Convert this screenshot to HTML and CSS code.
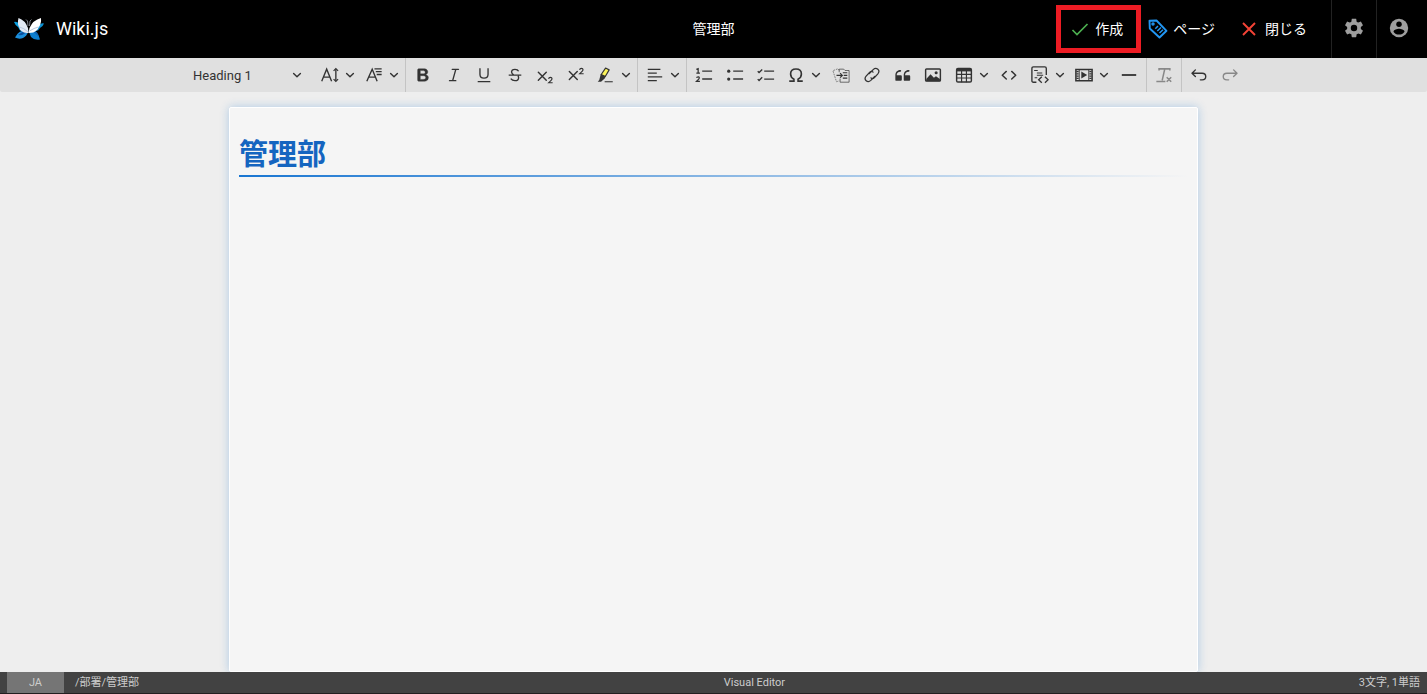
FILE: index.html
```html
<!DOCTYPE html>
<html lang="ja">
<head>
<meta charset="utf-8">
<meta name="viewport" content="width=device-width, initial-scale=1">
<title>管理部 | Wiki.js</title>
<link rel="stylesheet" href="styles.css">
</head>
<body>
<svg class="sprite" aria-hidden="true">
  <symbol id="chev" viewBox="0 0 10 10"><path d="M1.600 3.400 5 6.800l3.400-3.400" fill="none" stroke="currentColor" stroke-width="1.400" stroke-linecap="round" stroke-linejoin="round"/></symbol>
</svg>

<header class="appbar">
  <a class="brand" href="#">
    <svg class="logo" viewBox="0 0 30 23" aria-hidden="true">
      <path d="M0 5 Q3 4 7 8 L11 14 6 13.500 4 10 Q1 8 0 5Z" fill="#0b9fe0"/>
      <path d="M30 6.500 Q27 5.500 23 9 L19 14 24 13.500 26 11 Q29 9.500 30 6.500Z" fill="#0b8fd0"/>
      <path d="M14 13 Q5 12 1 20.500 Q5 22.500 9 21 Q13 19 14.500 14Z" fill="#1b8edb"/>
      <path d="M15.500 13 Q24 12 26 22.500 Q20 23.500 17 20 Q15 17 15.500 13Z" fill="#0d7fd0"/>
      <path d="M12 14 Q7 15 4 18 Q10 19 13 14Z" fill="#0c4f9c"/>
      <path d="M17 14 Q21 15 24 19 Q24 14 18 13Z" fill="#0c5fb0"/>
      <path d="M4.500 1 Q11 3 14 11 L14.500 16 Q10 16.500 7.500 14 Q5.500 13 5.500 11 Q3 7 4.500 1Z" fill="#e3eaf4"/>
      <path d="M27 1 Q19 3 15.500 11 L14.500 16 Q20 16 22.500 13.500 Q24 12.500 24.500 10.500 Q27.500 7 27 1Z" fill="#fff"/>
      <path d="M5.500 10 Q10 11 14 15M24.500 10 Q20 11 15.500 14" fill="none" stroke="#b9c8de" stroke-width="1"/>
      <path d="M14 9 13.500 4 12 2.500M15.500 9 16 4 17.500 2.500" fill="none" stroke="#7c7f88" stroke-width="1"/>
    </svg>
    <span>Wiki.js</span>
  </a>
  <div class="page-title">管理部</div>
  <div class="actions">
    <button class="action create" type="button">
      <svg width="18" height="18" viewBox="0 0 18 18" aria-hidden="true"><path d="M1.500 10 6 14.500 16.500 4" fill="none" stroke="#4caf50" stroke-width="1.700"/></svg>
      <span>作成</span>
    </button>
    <button class="action props" type="button">
      <svg width="20" height="20" viewBox="0 0 20 20" aria-hidden="true"><g fill="none" stroke="#2196f3" stroke-width="1.900"><path d="M1.500 1.800 8.500 1.500 18.500 11.800 11.500 18.500 1.800 9.500Z" stroke-linejoin="round"/><circle cx="5" cy="5" r="1" stroke-width="1.500"/><path d="M7.300 9.700 10 7M9.300 12 13 8.500M11.500 14 15 10.800" stroke-width="1.500"/></g></svg>
      <span>ページ</span>
    </button>
    <button class="action close" type="button">
      <svg width="14" height="14" viewBox="0 0 14 14" aria-hidden="true"><path d="M1 1 13 13M13 1 1 13" stroke="#f44336" stroke-width="1.900"/></svg>
      <span>閉じる</span>
    </button>
    <button class="icon-action" type="button" aria-label="設定">
      <svg width="22" height="22" viewBox="0 0 24 24" fill="currentColor"><path d="M12,15.5A3.5,3.5 0 0,1 8.5,12A3.5,3.5 0 0,1 12,8.5A3.5,3.5 0 0,1 15.5,12A3.5,3.5 0 0,1 12,15.5M19.43,12.97C19.47,12.65 19.5,12.33 19.5,12C19.5,11.67 19.47,11.34 19.43,11L21.54,9.37C21.73,9.22 21.78,8.95 21.66,8.73L19.66,5.27C19.54,5.05 19.27,4.96 19.05,5.05L16.56,6.05C16.04,5.66 15.5,5.32 14.87,5.07L14.5,2.42C14.46,2.18 14.25,2 14,2H10C9.75,2 9.54,2.18 9.5,2.42L9.13,5.07C8.5,5.32 7.96,5.66 7.44,6.05L4.95,5.05C4.73,4.96 4.46,5.05 4.34,5.27L2.34,8.73C2.21,8.95 2.27,9.22 2.46,9.37L4.57,11C4.53,11.34 4.5,11.67 4.5,12C4.5,12.33 4.53,12.65 4.57,12.97L2.46,14.63C2.27,14.78 2.21,15.05 2.34,15.27L4.34,18.73C4.46,18.95 4.73,19.03 4.95,18.95L7.44,17.94C7.96,18.34 8.5,18.68 9.13,18.93L9.5,21.58C9.54,21.82 9.75,22 10,22H14C14.25,22 14.46,21.82 14.5,21.58L14.87,18.93C15.5,18.67 16.04,18.34 16.56,17.94L19.05,18.95C19.27,19.03 19.54,18.95 19.66,18.73L21.66,15.27C21.78,15.05 21.73,14.78 21.54,14.63L19.43,12.97Z"/></svg>
    </button>
    <button class="icon-action account" type="button" aria-label="アカウント">
      <svg width="22" height="22" viewBox="0 0 24 24"><circle cx="12" cy="12" r="10" fill="currentColor"/><circle cx="12" cy="8" r="3" fill="#000"/><path d="M6 15.980C7.290 17.920 9.500 19.200 12 19.200s4.710-1.280 6-3.220C17.970 14 14 12.900 12 12.900S6.030 14 6 15.980Z" fill="#000"/></svg>
    </button>
  </div>
</header>

<div class="toolbar" role="toolbar" aria-label="Editor toolbar">
  <div class="group g-style">
    <button class="heading" type="button"><span>Heading 1</span><svg class="chev"><use href="#chev"/></svg></button>
    <button class="tool drop" type="button" aria-label="Font Size"><svg class="ico" viewBox="0 0 20 20"><g fill="none" stroke="currentColor" stroke-width="1.500"><path d="M.8 17 6.300 3.500 11.800 17M3 12.300h6.800M16.500 3.500v13"/><path d="M14 5.500 16.500 3 19 5.500M14 14.500 16.500 17 19 14.500" stroke-width="1.300"/></g></svg><svg class="chev"><use href="#chev"/></svg></button>
    <button class="tool drop" type="button" aria-label="Font Family"><svg class="ico" viewBox="0 0 20 20"><path d="M2 17 8 3.500 13.500 17M4.200 12.300h7.500M10.500 3.200h8M12 6.300h6.500M13 9.400h5.500" fill="none" stroke="currentColor" stroke-width="1.500"/></svg><svg class="chev"><use href="#chev"/></svg></button>
  </div>
  <div class="group g-basic">
    <button class="tool" type="button" aria-label="Bold"><svg class="ico" viewBox="0 0 20 20"><path d="M10.187 17H5.773c-.637 0-1.092-.138-1.364-.415-.273-.277-.409-.718-.409-1.323V4.738c0-.617.14-1.062.419-1.332.279-.27.73-.406 1.354-.406h4.680c.69 0 1.288.041 1.793.124.506.083.96.242 1.360.478.341.197.644.447.906.75a3.262 3.262 0 0 1 .808 2.162c0 1.401-.722 2.426-2.167 3.075C15.050 10.175 16 11.315 16 13.010a3.756 3.756 0 0 1-2.296 3.504 6.100 6.100 0 0 1-1.517.377c-.571.073-1.238.11-2 .11zm-.217-6.217H7v4.087h3.069c1.977 0 2.965-.69 2.965-2.072 0-.707-.256-1.220-.768-1.537-.512-.319-1.277-.478-2.296-.478zM7 5.130v3.619h2.606c.729 0 1.292-.067 1.690-.2a1.600 1.600 0 0 0 .91-.765c.165-.267.247-.566.247-.897 0-.707-.26-1.176-.778-1.409-.519-.232-1.310-.348-2.375-.348H7z" fill="currentColor" stroke="currentColor" stroke-width=".4"/></svg></button>
    <button class="tool" type="button" aria-label="Italic"><svg class="ico" viewBox="0 0 20 20"><path d="M8 3.700h7M5 16.300h7M12 3.700 8.500 16.300" fill="none" stroke="currentColor" stroke-width="1.500" stroke-linecap="round"/></svg></button>
    <button class="tool" type="button" aria-label="Underline"><svg class="ico" viewBox="0 0 20 20"><path d="M5.500 2.500v6.700q0 4.300 4.500 4.300t4.500-4.300V2.500M3 17.300h14" fill="none" stroke="currentColor" stroke-width="1.500"/></svg></button>
    <button class="tool" type="button" aria-label="Strikethrough"><svg class="ico" viewBox="0 0 20 20"><path d="M14 5.800Q13 3.700 10 3.700 6.200 3.700 6.200 6.700 6.200 8.500 8.500 9.700M5.300 14Q7 16.300 10 16.300 14 16.300 14 13 14 12 13.300 11M3 10.200h14" fill="none" stroke="currentColor" stroke-width="1.500"/></svg></button>
    <button class="tool" type="button" aria-label="Subscript"><svg class="ico" viewBox="0 0 20 20"><path d="M2.600 7 11.400 15.900M11.400 7 2.600 15.900" stroke="currentColor" stroke-width="1.600" stroke-linecap="round"/><path d="M14 14.200Q14.300 12.700 16 12.700 17.800 12.700 17.800 14.300 17.800 15.300 14.200 18.600H18.500" fill="none" stroke="currentColor" stroke-width="1.300"/></svg></button>
    <button class="tool" type="button" aria-label="Superscript"><svg class="ico" viewBox="0 0 20 20"><path d="M2.600 6 11.400 14.900M11.400 6 2.600 14.900" stroke="currentColor" stroke-width="1.600" stroke-linecap="round"/><path d="M14 4.200Q14.300 2.700 16 2.700 17.800 2.700 17.800 4.300 17.800 5.300 14.200 8.600H18.500" fill="none" stroke="currentColor" stroke-width="1.300"/></svg></button>
    <button class="tool drop" type="button" aria-label="Highlight"><svg class="ico" viewBox="0 0 20 20"><path d="M9.500 2.300 13.500 4.300 9.200 11.700 4.700 9.500Z" fill="#fbf45a" stroke="currentColor" stroke-width="1.300" stroke-linejoin="round"/><path d="M4.200 9 9.500 11.800 8.800 13.700 4.500 17.500H.8L2.500 15.500Z" fill="currentColor"/><path d="M8.500 17.500h9" stroke="currentColor" stroke-width="1.200"/></svg><svg class="chev"><use href="#chev"/></svg></button>
  </div>
  <div class="group g-align">
    <button class="tool drop" type="button" aria-label="Text alignment"><svg class="ico" viewBox="0 0 20 20"><path d="M2 3.700h14M2 7.900h10M2 12.100h16M2 16.300h10" stroke="currentColor" stroke-width="1.500"/></svg><svg class="chev"><use href="#chev"/></svg></button>
  </div>
  <div class="group g-insert">
    <button class="tool" type="button" aria-label="Numbered List"><svg class="ico" viewBox="0 0 20 20"><path d="M8 5.700h11M8 14.500h11" stroke="currentColor" stroke-width="1.600"/><path d="M1.500 3.700 3.500 3V8M1.500 8h4M1.500 12.800Q4.800 11.300 4.800 13.300 4.800 14.200 1.800 17H5.500" fill="none" stroke="currentColor" stroke-width="1.400"/></svg></button>
    <button class="tool" type="button" aria-label="Bulleted List"><svg class="ico" viewBox="0 0 20 20"><path d="M8 5.700h11M8 14.500h11" stroke="currentColor" stroke-width="1.600"/><circle cx="3" cy="5.700" r="1.800" fill="currentColor"/><circle cx="3" cy="14.500" r="1.800" fill="currentColor"/></svg></button>
    <button class="tool" type="button" aria-label="To-do List"><svg class="ico" viewBox="0 0 20 20"><path d="M8 5.700h11M8 14.500h11M.8 5.800 2.300 7.300 5.800 3.800M.8 14.600 2.300 16.100 5.800 12.600" fill="none" stroke="currentColor" stroke-width="1.500"/></svg></button>
    <button class="tool drop" type="button" aria-label="Special characters"><svg class="ico" viewBox="0 0 20 20"><path d="M2.500 16.800H7.700V14.700Q4 12.500 4 8.800 4 3.400 10 3.400T16 8.800Q16 12.500 12.300 14.700V16.800H17.500" fill="none" stroke="currentColor" stroke-width="1.800"/></svg><svg class="chev"><use href="#chev"/></svg></button>
    <button class="tool" type="button" aria-label="Insert page link"><svg class="ico" viewBox="0 0 20 20"><g fill="none" stroke="currentColor"><path d="M8 5 6.800 3 1 5.200 5 17.500 8 16.500" stroke-dasharray="2 1" opacity=".6"/><path d="M8 7V3.500h5L14.500 5H19v13H9v-4" opacity=".75"/><path d="M5 10.500h6M9 8l2.500 2.500L9 13M12 7.500h5M13 10.500h4M12 13.500h5" stroke-width="1.300"/></g></svg></button>
    <button class="tool" type="button" aria-label="Link"><svg class="ico" viewBox="0 0 20 20"><g fill="none" stroke="currentColor" stroke-width="1.400" stroke-linecap="round"><path d="M7 8.500 11.300 4Q14 1.500 16.500 3.700T16.300 9L12.500 13Q10.500 14.800 8.800 13.200"/><path d="M13 11.500 8.700 16Q6 18.500 3.500 16.300T3.700 11L7.500 7Q9.500 5.200 11.200 6.800"/></g></svg></button>
    <button class="tool" type="button" aria-label="Block quote"><svg class="ico" viewBox="0 0 20 20"><path d="M3 10.400a4 4 0 0 1 4-4c.59 0 .966-.408 1-1 0-.7-.3-1-1-1-3.500 0-5.500 2.600-5.500 6v4.800c0 .9.500 1.300 1.300 1.300h4.500c.9 0 1.400-.5 1.400-1.400v-3.300c0-.9-.5-1.400-1.400-1.400ZM12.300 10.400a4 4 0 0 1 4-4c.59 0 .966-.408 1-1 0-.7-.3-1-1-1-3.500 0-5.500 2.600-5.500 6v4.800c0 .9.500 1.300 1.300 1.300h4.500c.9 0 1.400-.5 1.400-1.400v-3.300c0-.9-.5-1.400-1.400-1.400Z" fill="currentColor"/></svg></button>
    <button class="tool" type="button" aria-label="Image"><svg class="ico" viewBox="0 0 20 20"><rect x="1.800" y="3.300" width="16.400" height="13.400" rx="1" fill="none" stroke="currentColor" stroke-width="1.600"/><path d="M2.500 14.500 7.300 9.300 11 13l2.300-1.500 4.400 3V17H2.500Z" fill="currentColor"/><circle cx="13.500" cy="7.500" r="1.700" fill="currentColor"/></svg></button>
    <button class="tool drop" type="button" aria-label="Table"><svg class="ico" viewBox="0 0 20 20"><rect x="1.800" y="2.800" width="16.400" height="15" rx="1.500" fill="none" stroke="currentColor" stroke-width="1.600"/><path d="M2 9.300h16M2 13.300h16M7.300 4v14M12.700 4v14" stroke="currentColor" stroke-width="1.300"/><path d="M2 3h16v3H2Z" fill="currentColor"/></svg><svg class="chev"><use href="#chev"/></svg></button>
    <button class="tool" type="button" aria-label="Code"><svg class="ico" viewBox="0 0 20 20"><path d="M7 6 2.500 10.200 7 14.500M13 6l4.500 4.200L13 14.500" fill="none" stroke="currentColor" stroke-width="1.600" stroke-linecap="round" stroke-linejoin="round"/></svg></button>
    <button class="tool drop" type="button" aria-label="Code block"><svg class="ico" viewBox="0 0 20 20"><g fill="none" stroke="currentColor" stroke-width="1.500"><path d="M6 18H2.700Q1 18 1 16.300V2.700Q1 1 2.700 1h12.600Q17 1 17 2.700V10"/><path d="M3.500 5h4M6.500 7.700h6M6.500 10.300h7M4 13h3" stroke-width="1.200"/><path d="M12 12 8.500 15.300 12 18.600M15.500 12 19 15.300 15.500 18.600"/></g></svg><svg class="chev"><use href="#chev"/></svg></button>
    <button class="tool drop" type="button" aria-label="Media"><svg class="ico" viewBox="0 0 20 20"><path d="M1 4h18v12.500H1Z" fill="none" stroke="currentColor" stroke-width="1.700"/><path d="M2.800 5.500v10M17.200 5.500v10" stroke="currentColor" stroke-width="2.500" stroke-dasharray="1.500 1"/><path d="M4.700 4v12M15.300 4v12" stroke="currentColor"/><path d="M7 6 13.500 10 7 14Z" fill="currentColor"/></svg><svg class="chev"><use href="#chev"/></svg></button>
    <button class="tool" type="button" aria-label="Horizontal line"><svg class="ico" viewBox="0 0 20 20"><path d="M2 10h16" stroke="currentColor" stroke-width="2"/></svg></button>
  </div>
  <div class="group g-clear">
    <button class="tool" type="button" aria-label="Remove Format" disabled><svg class="ico" viewBox="0 0 20 20"><path d="M4.500 5V3.200H16.500V5M10.800 3.500 8 16M1.500 17.200h10M13 12.500l5 5M18 12.500l-5 5" fill="none" stroke="currentColor" stroke-width="1.700"/></svg></button>
  </div>
  <div class="group g-history">
    <button class="tool" type="button" aria-label="Undo"><svg class="ico" viewBox="0 0 20 20"><path d="M6 4.300 2.200 8 6 11.700M2.500 8H13.500Q17.500 8 17.500 11.700T13.500 15.400H11.500" fill="none" stroke="currentColor" stroke-width="1.500" stroke-linecap="round" stroke-linejoin="round"/></svg></button>
    <button class="tool" type="button" aria-label="Redo" disabled><svg class="ico" viewBox="0 0 20 20"><path d="M14 4.300 17.800 8 14 11.700M17.500 8H6.500Q2.500 8 2.500 11.700T6.500 15.400H8.500" fill="none" stroke="currentColor" stroke-width="1.500" stroke-linecap="round" stroke-linejoin="round"/></svg></button>
  </div>
</div>

<main class="workspace">
  <article class="sheet" contenteditable="true" spellcheck="false">
    <h1>管理部</h1>
  </article>
</main>

<footer class="status">
  <div class="status-left"><span class="locale">JA</span><span class="path">/部署/管理部</span></div>
  <span>Visual Editor</span>
  <span>3文字, 1単語</span>
</footer>
</body>
</html>
```
FILE: styles.css
```css
* { box-sizing: border-box; }

body {
  margin: 0;
  height: 100vh;
  display: flex;
  flex-direction: column;
  overflow: hidden;
  background: #eee;
  font-family: Roboto, "Noto Sans CJK JP", sans-serif;
}

button {
  border: 0;
  padding: 0;
  margin: 0;
  background: none;
  font: inherit;
  color: inherit;
  cursor: pointer;
}

svg { display: block; flex: none; }
.sprite { position: absolute; width: 0; height: 0; }

/* Top bar */
.appbar {
  display: grid;
  grid-template-columns: 1fr auto 1fr;
  align-items: center;
  height: 58px;
  flex: none;
  background: #000;
  color: #fff;
}

.brand {
  display: flex;
  align-items: center;
  gap: 12px;
  padding: 0 0 2px 14px;
  color: #fff;
  text-decoration: none;
  font-size: 18px;
}
.logo { width: 30px; height: 23px; }
.page-title { padding-bottom: 2px; font-size: 14px; }

.actions {
  display: flex;
  justify-content: flex-end;
  align-items: center;
  height: 100%;
  font-size: 14px;
}
.action {
  display: flex;
  align-items: center;
  height: 48px;
}
.action span { padding-bottom: 3px; }
.create {
  gap: 6px;
  padding: 0 13px 0 10px;
  border: 5px solid #ed1c24;
}
.props { gap: 5px; padding: 0 14px 0 7px; }
.close { gap: 9px; padding: 0 24px 0 13px; }
.icon-action {
  display: flex;
  align-items: center;
  justify-content: center;
  width: 45px;
  height: 100%;
  padding-bottom: 2px;
  border-left: 1px solid #222;
  color: #9e9e9e;
}
.account { width: 51px; padding-right: 6px; }

/* Formatting toolbar */
.toolbar {
  display: flex;
  justify-content: center;
  height: 34px;
  flex: none;
  padding-left: 4px;
  background: #e0e0e0;
  border-radius: 0 0 2px 2px;
  color: #333;
}
.group {
  display: flex;
  flex: none;
  align-items: center;
  justify-content: space-between;
  padding: 0 3px;
  border-left: 1px solid #c4c4c4;
}
.g-style { width: 221px; border-left: 0; }
.g-basic { width: 232px; }
.g-align { width: 49px; }
.g-insert { width: 460px; }
.g-clear { width: 35px; }
.g-history { width: 66px; }

.heading {
  display: flex;
  align-items: center;
  justify-content: space-between;
  width: 127px;
  height: 28px;
  padding: 0 12px 0 6px;
  font-size: 13px;
}
.tool {
  display: flex;
  align-items: center;
  width: 28px;
  height: 28px;
  padding: 0 5px;
}
.tool:disabled { opacity: .5; cursor: default; }
.drop { width: 42px; gap: 6px; }
.ico { width: 18px; height: 18px; }
.chev { width: 10px; height: 10px; }

/* Document sheet */
.workspace {
  flex: 1;
  display: flex;
  justify-content: center;
  min-height: 0;
  padding-top: 15px;
}
.sheet {
  width: 100%;
  max-width: 969px;
  padding: 28px 9px;
  background: #f5f5f5;
  border: 1px solid #fff;
  border-radius: 2px;
  box-shadow: 0 0 10px rgba(25, 118, 210, .3);
  outline: 0;
}
.sheet h1 {
  margin: 0;
  padding-bottom: 1px;
  border-bottom: 2px solid;
  border-image: linear-gradient(to right, #1976d2, rgba(25, 118, 210, 0)) 1;
  color: #1565c0;
  font-size: 29px;
  line-height: 38px;
  font-weight: 700;
}

/* Status bar */
.status {
  display: flex;
  align-items: center;
  justify-content: space-between;
  height: 22px;
  flex: none;
  padding: 0 7px;
  background: #424242;
  border-bottom: 1px solid #231f20;
  color: #ccc;
  font-size: 11px;
  line-height: 21px;
}
.status-left { display: flex; align-items: center; }
.locale {
  width: 57px;
  text-align: center;
  background: #757575;
}
.path { padding: 0 11px; }
```
